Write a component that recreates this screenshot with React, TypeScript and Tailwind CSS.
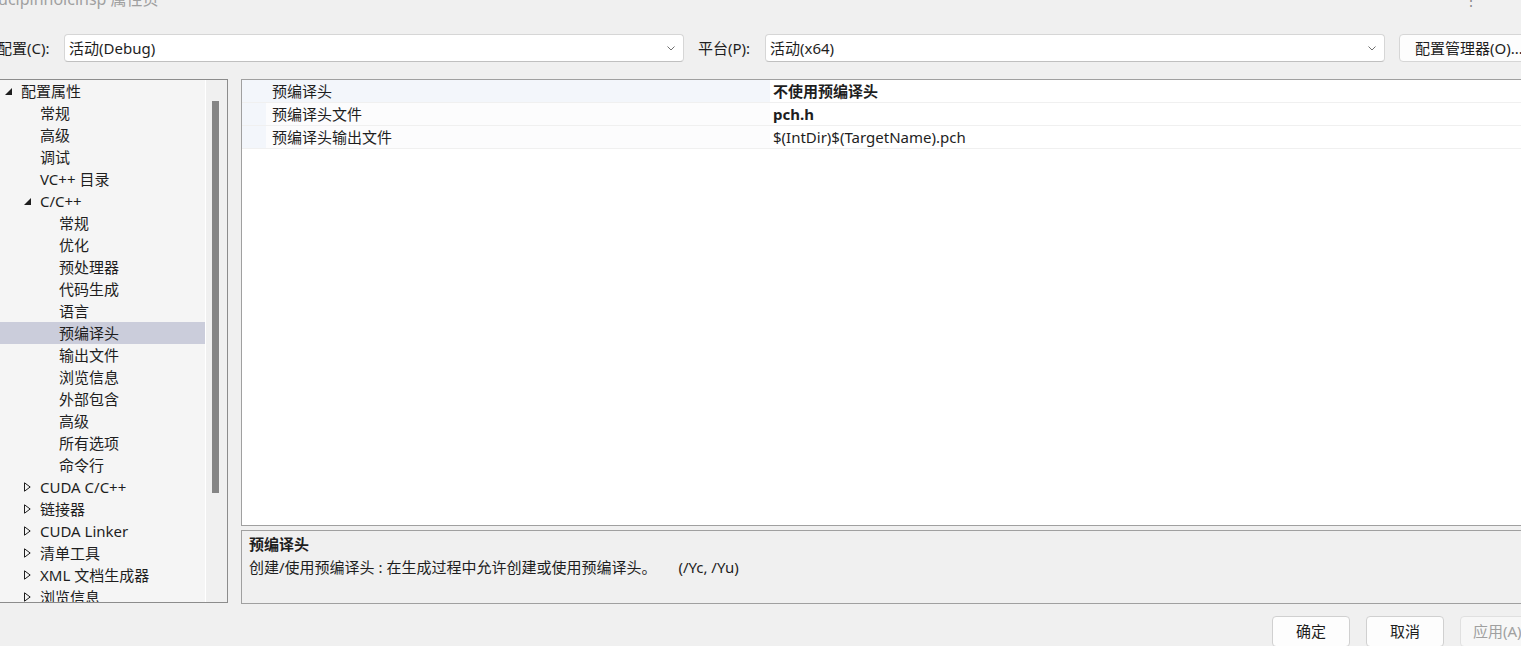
import React from "react";

type Node = { label: string; level: 0 | 1 | 2; arrow?: "open" | "closed"; selected?: boolean };

const tree: Node[] = [
  { label: "配置属性", level: 0, arrow: "open" },
  { label: "常规", level: 1 },
  { label: "高级", level: 1 },
  { label: "调试", level: 1 },
  { label: "VC++ 目录", level: 1 },
  { label: "C/C++", level: 1, arrow: "open" },
  { label: "常规", level: 2 },
  { label: "优化", level: 2 },
  { label: "预处理器", level: 2 },
  { label: "代码生成", level: 2 },
  { label: "语言", level: 2 },
  { label: "预编译头", level: 2, selected: true },
  { label: "输出文件", level: 2 },
  { label: "浏览信息", level: 2 },
  { label: "外部包含", level: 2 },
  { label: "高级", level: 2 },
  { label: "所有选项", level: 2 },
  { label: "命令行", level: 2 },
  { label: "CUDA C/C++", level: 1, arrow: "closed" },
  { label: "链接器", level: 1, arrow: "closed" },
  { label: "CUDA Linker", level: 1, arrow: "closed" },
  { label: "清单工具", level: 1, arrow: "closed" },
  { label: "XML 文档生成器", level: 1, arrow: "closed" },
  { label: "浏览信息", level: 1, arrow: "closed" },
];

const props = [
  { name: "预编译头", value: "不使用预编译头", bold: true, active: true },
  { name: "预编译头文件", value: "pch.h", bold: true },
  { name: "预编译头输出文件", value: "$(IntDir)$(TargetName).pch" },
];

function Arrow({ kind }: { kind: "open" | "closed" }) {
  if (kind === "open") {
    return (
      <svg width="7" height="7" viewBox="0 0 7 7">
        <path d="M7 0 L7 7 L0 7 Z" fill="#1e1e1e" />
      </svg>
    );
  }
  return (
    <svg width="7" height="10" viewBox="0 0 7 10">
      <path d="M0.5 0.8 L6.2 5 L0.5 9.2 Z" fill="none" stroke="#1e1e1e" strokeWidth="1" />
    </svg>
  );
}

function Chevron() {
  return (
    <svg width="8" height="5" viewBox="0 0 8 5">
      <path d="M0.5 0.5 L4 4 L7.5 0.5" fill="none" stroke="#707070" strokeWidth="1" />
    </svg>
  );
}

function Combo({ value }: { value: string }) {
  return (
    <div className="shrink-0 w-[620px] h-[28px] flex items-center justify-between pl-[4px] pr-[8px] bg-white border border-[#d6d6d6] border-b-[#c0c0c0] rounded-[4px]">
      <span>{value}</span>
      <Chevron />
    </div>
  );
}

export default function App() {
  return (
    <div className="w-[1521px] h-[646px] overflow-hidden bg-[#f0f0f0] text-[15px] text-[#1e1e1e] font-['Noto_Sans','Noto_Sans_CJK_SC',sans-serif]">
      {/* title bar, mostly scrolled off */}
      <div className="h-[34px] flex">
        <span className="shrink-0 -mt-[11px] -ml-[2px] leading-[20px] text-[#a0a0a0] text-[16px] whitespace-nowrap">
          ucipinnolcinsp 属性页
        </span>
        <span className="shrink-0 -mt-[9px] ml-[1305px] leading-[20px] text-[#8a8a8a] text-[14px]">⋮</span>
      </div>

      {/* config row */}
      <div className="h-[28px] flex items-center">
        <span className="shrink-0 -ml-[3px] w-[67px] whitespace-nowrap">配置(C):</span>
        <Combo value="活动(Debug)" />
        <span className="shrink-0 ml-[14px] w-[67px] whitespace-nowrap">平台(P):</span>
        <Combo value="活动(x64)" />
        <div className="shrink-0 ml-[14px] w-[132px] h-[28px] flex items-center pl-[15px] bg-[#fdfdfd] border border-[#d6d6d6] rounded-[4px] whitespace-nowrap">
          配置管理器(O)...
        </div>
      </div>

      <div className="mt-[17px] flex gap-[13px]">
        {/* tree */}
        <div className="shrink-0 w-[228px] h-[524px] flex border-y border-r border-[#8c8c8c] bg-[#f5f5f5]">
          <div className="w-[205px] overflow-hidden">
            {tree.map((n, i) => (
              <div
                key={i}
                className={
                  "h-[22px] flex items-center whitespace-nowrap " + (n.selected ? "bg-[#cbcddb]" : "")
                }
              >
                <span
                  className={
                    "shrink-0 flex items-center justify-start " +
                    (n.level === 0 ? "pl-[5px] w-[21px]" : n.level === 1 ? "pl-[24px] w-[40px]" : "w-[59px]")
                  }
                >
                  {n.arrow ? <Arrow kind={n.arrow} /> : null}
                </span>
                <span>{n.label}</span>
              </div>
            ))}
          </div>
          <div className="w-px bg-white" />
          <div className="flex-1 bg-[#f0f0f0] pt-[21px] pl-[6px]">
            <div className="w-[7px] h-[392px] bg-[#858585]" />
          </div>
        </div>

        {/* right side */}
        <div className="shrink-0 w-[1290px] flex flex-col">
          <div className="h-[447px] border border-[#a0a0a0] bg-white">
            {props.map((p, i) => (
              <div key={i} className="h-[23px] flex border-b border-[#f0f0f0]">
                <div className="w-[24px] bg-[#f3f6fb]" />
                <div
                  className={
                    "w-[504px] pl-[6px] leading-[22px] " + (p.active ? "bg-[#f3f6fb]" : "bg-[#fcfcfd]")
                  }
                >
                  {p.name}
                </div>
                <div className={"flex-1 pl-[3px] leading-[22px] " + (p.bold ? "font-bold" : "")}>{p.value}</div>
              </div>
            ))}
          </div>
          <div className="mt-[4px] h-[74px] border border-[#a0a0a0] bg-[#f0f0f0] px-[7px] pt-[2px] leading-[23px]">
            <div className="font-bold">预编译头</div>
            <div className="flex">
              <span>创建/使用预编译头 : 在生成过程中允许创建或使用预编译头。</span>
              <span className="ml-[22px]">(/Yc, /Yu)</span>
            </div>
          </div>
        </div>
      </div>

      {/* dialog buttons */}
      <div className="mt-[12px] ml-[1272px] flex gap-[16px]">
        <div className="shrink-0 w-[78px] h-[31px] flex items-center justify-center bg-[#fdfdfd] border border-[#d0d0d0] rounded-[4px]">
          确定
        </div>
        <div className="shrink-0 w-[78px] h-[31px] flex items-center justify-center bg-[#fdfdfd] border border-[#d0d0d0] rounded-[4px]">
          取消
        </div>
        <div className="shrink-0 w-[78px] h-[31px] flex items-center pl-[12px] bg-[#f7f7f7] border border-[#e0e0e0] rounded-[4px] text-[#a0a0a0] whitespace-nowrap">
          应用(A)
        </div>
      </div>
    </div>
  );
}
